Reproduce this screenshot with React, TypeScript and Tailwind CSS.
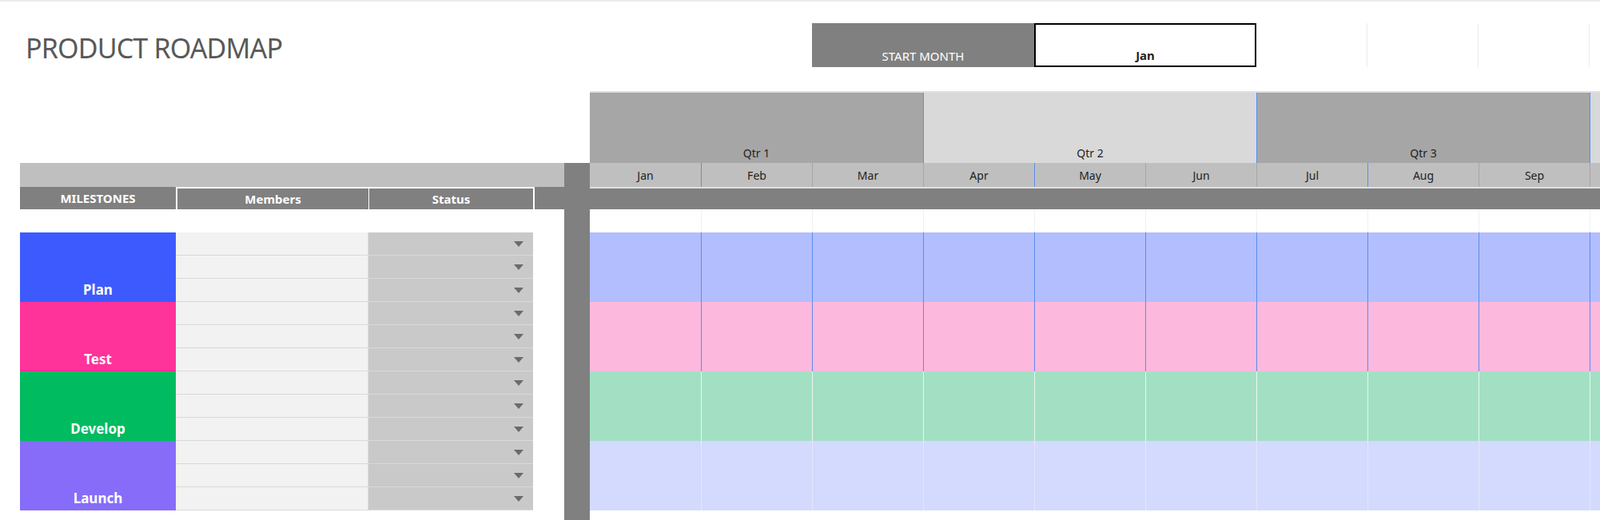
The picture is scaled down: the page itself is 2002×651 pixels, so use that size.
import React from 'react'

const months = ['Jan', 'Feb', 'Mar', 'Apr', 'May', 'Jun', 'Jul', 'Aug', 'Sep', '']
const quarters = [
  { label: 'Qtr 1', bg: 'bg-[#a6a6a6]' },
  { label: 'Qtr 2', bg: 'bg-[#d9d9d9]' },
  { label: 'Qtr 3', bg: 'bg-[#a6a6a6]' },
  { label: '', bg: 'bg-[#d9d9d9]' },
]
const groups = [
  { name: 'Plan', solid: 'bg-[#3d5afe]', light: 'bg-[#b3befe]', line: 'border-[#5b8def]' },
  { name: 'Test', solid: 'bg-[#ff3399]', light: 'bg-[#fdb9dd]', line: 'border-[#5b8def]' },
  { name: 'Develop', solid: 'bg-[#00bb5f]', light: 'bg-[#a3e0c3]', line: 'border-[#e8f6ef]' },
  { name: 'Launch', solid: 'bg-[#866cf9]', light: 'bg-[#d3dafd]', line: 'border-[#e3e7fb]' },
]

const Arrow = () => (
  <svg width="12" height="7" viewBox="0 0 12 7" className="mr-[12px]">
    <polygon points="0,0 12,0 6,7" fill="#6b6b6b" />
  </svg>
)

export default function App() {
  return (
    <div className="w-[2002px] h-[651px] overflow-hidden bg-white font-['Lato','Liberation_Sans',sans-serif] border-t-2 border-[#ececec]">
      {/* Top */}
      <div className="flex h-[112px]">
        <div className="w-[1016px] pl-[32px] pt-[41px] text-[34px] text-[#595959] font-['Open_Sans',sans-serif] tracking-tight leading-none">
          PRODUCT ROADMAP
        </div>
        <div className="flex mt-[27px] h-[55px]">
          <div className="w-[278px] bg-[#808080] text-white text-[15px] flex items-end justify-center pb-[3px]">START MONTH</div>
          <div className="w-[278px] border-2 border-black text-[15px] font-bold text-[#222] flex items-end justify-center pb-[2px]">Jan</div>
          <div className="w-[139px] border-r border-[#ececec]" />
          <div className="w-[139px] border-r border-[#ececec]" />
          <div className="w-[139px] border-r border-[#ececec]" />
        </div>
      </div>

      <div className="flex">
        {/* Left table */}
        <div className="w-[738px] shrink-0 flex flex-col">
          <div className="h-[90px]" />
          <div className="flex">
            <div className="pl-[25px] w-[706px] shrink-0">
              <div className="h-[30px] bg-[#bfbfbf]" />
              <div className="h-[28px] flex bg-[#808080] text-white text-[15px] font-bold">
                <div className="w-[195px] flex items-center justify-center">MILESTONES</div>
                <div className="w-[241px] flex items-center justify-center border-l-2 border-t-2 border-white">Members</div>
                <div className="w-[206px] flex items-center justify-center border-l border-t-2 border-white">Status</div>
                <div className="flex-1 border-l-2 border-white" />
              </div>
              <div className="h-[29px]" />
              {groups.map((g) => (
                <div key={g.name} className="flex h-[87px]">
                  <div className={`w-[195px] ${g.solid} text-white font-bold text-[17px] flex items-end justify-center pb-[3px]`}>
                    {g.name}
                  </div>
                  <div className="w-[447px] flex flex-col">
                    {[0, 1, 2].map((i) => (
                      <div key={i} className="flex h-[29px] border-b border-[#d9d9d9]">
                        <div className="w-[241px] bg-[#f2f2f2] border-r border-[#e0e0e0]" />
                        <div className="w-[206px] bg-[#c9c9c9] flex items-center justify-end">
                          <Arrow />
                        </div>
                      </div>
                    ))}
                  </div>
                </div>
              ))}
            </div>
            <div className="w-[32px] bg-[#808080] h-[450px]" />
          </div>
        </div>

        {/* Gantt */}
        <div className="flex-1 overflow-hidden">
          <div className="flex h-[90px] w-[1668px] border-t-2 border-[#e0e0e0]">
            {quarters.map((q, i) => (
              <div key={i} className={`w-[417px] shrink-0 ${q.bg} ${i > 0 ? 'border-l border-[#5b8def]' : ''} flex items-end justify-center pb-[2px] text-[14px] text-[#222]`}>
                {q.label}
              </div>
            ))}
          </div>
          <div className="flex h-[30px] w-[1668px] bg-[#bfbfbf]">
            {months.map((m, i) => (
              <div key={i} className={`w-[139px] shrink-0 flex items-center justify-center text-[14px] text-[#222] ${i > 0 ? (i % 3 === 1 ? 'border-l border-[#5b8def]' : 'border-l border-[#a6a6a6]') : ''}`}>
                {m}
              </div>
            ))}
          </div>
          <div className="h-[28px] bg-[#808080] border-t-2 border-[#e0e0e0]" />
          <div className="flex h-[29px] w-[1668px]">
            {months.map((m, i) => (
              <div key={i} className={`w-[139px] shrink-0 ${i > 0 ? 'border-l border-[#f0f0f0]' : ''}`} />
            ))}
          </div>
          {groups.map((g) => (
            <div key={g.name} className={`flex h-[87px] w-[1668px] ${g.light}`}>
              {months.map((m, i) => (
                <div key={i} className={`w-[139px] shrink-0 ${i > 0 ? `border-l ${g.line}` : ''}`} />
              ))}
            </div>
          ))}
        </div>
      </div>
    </div>
  )
}
